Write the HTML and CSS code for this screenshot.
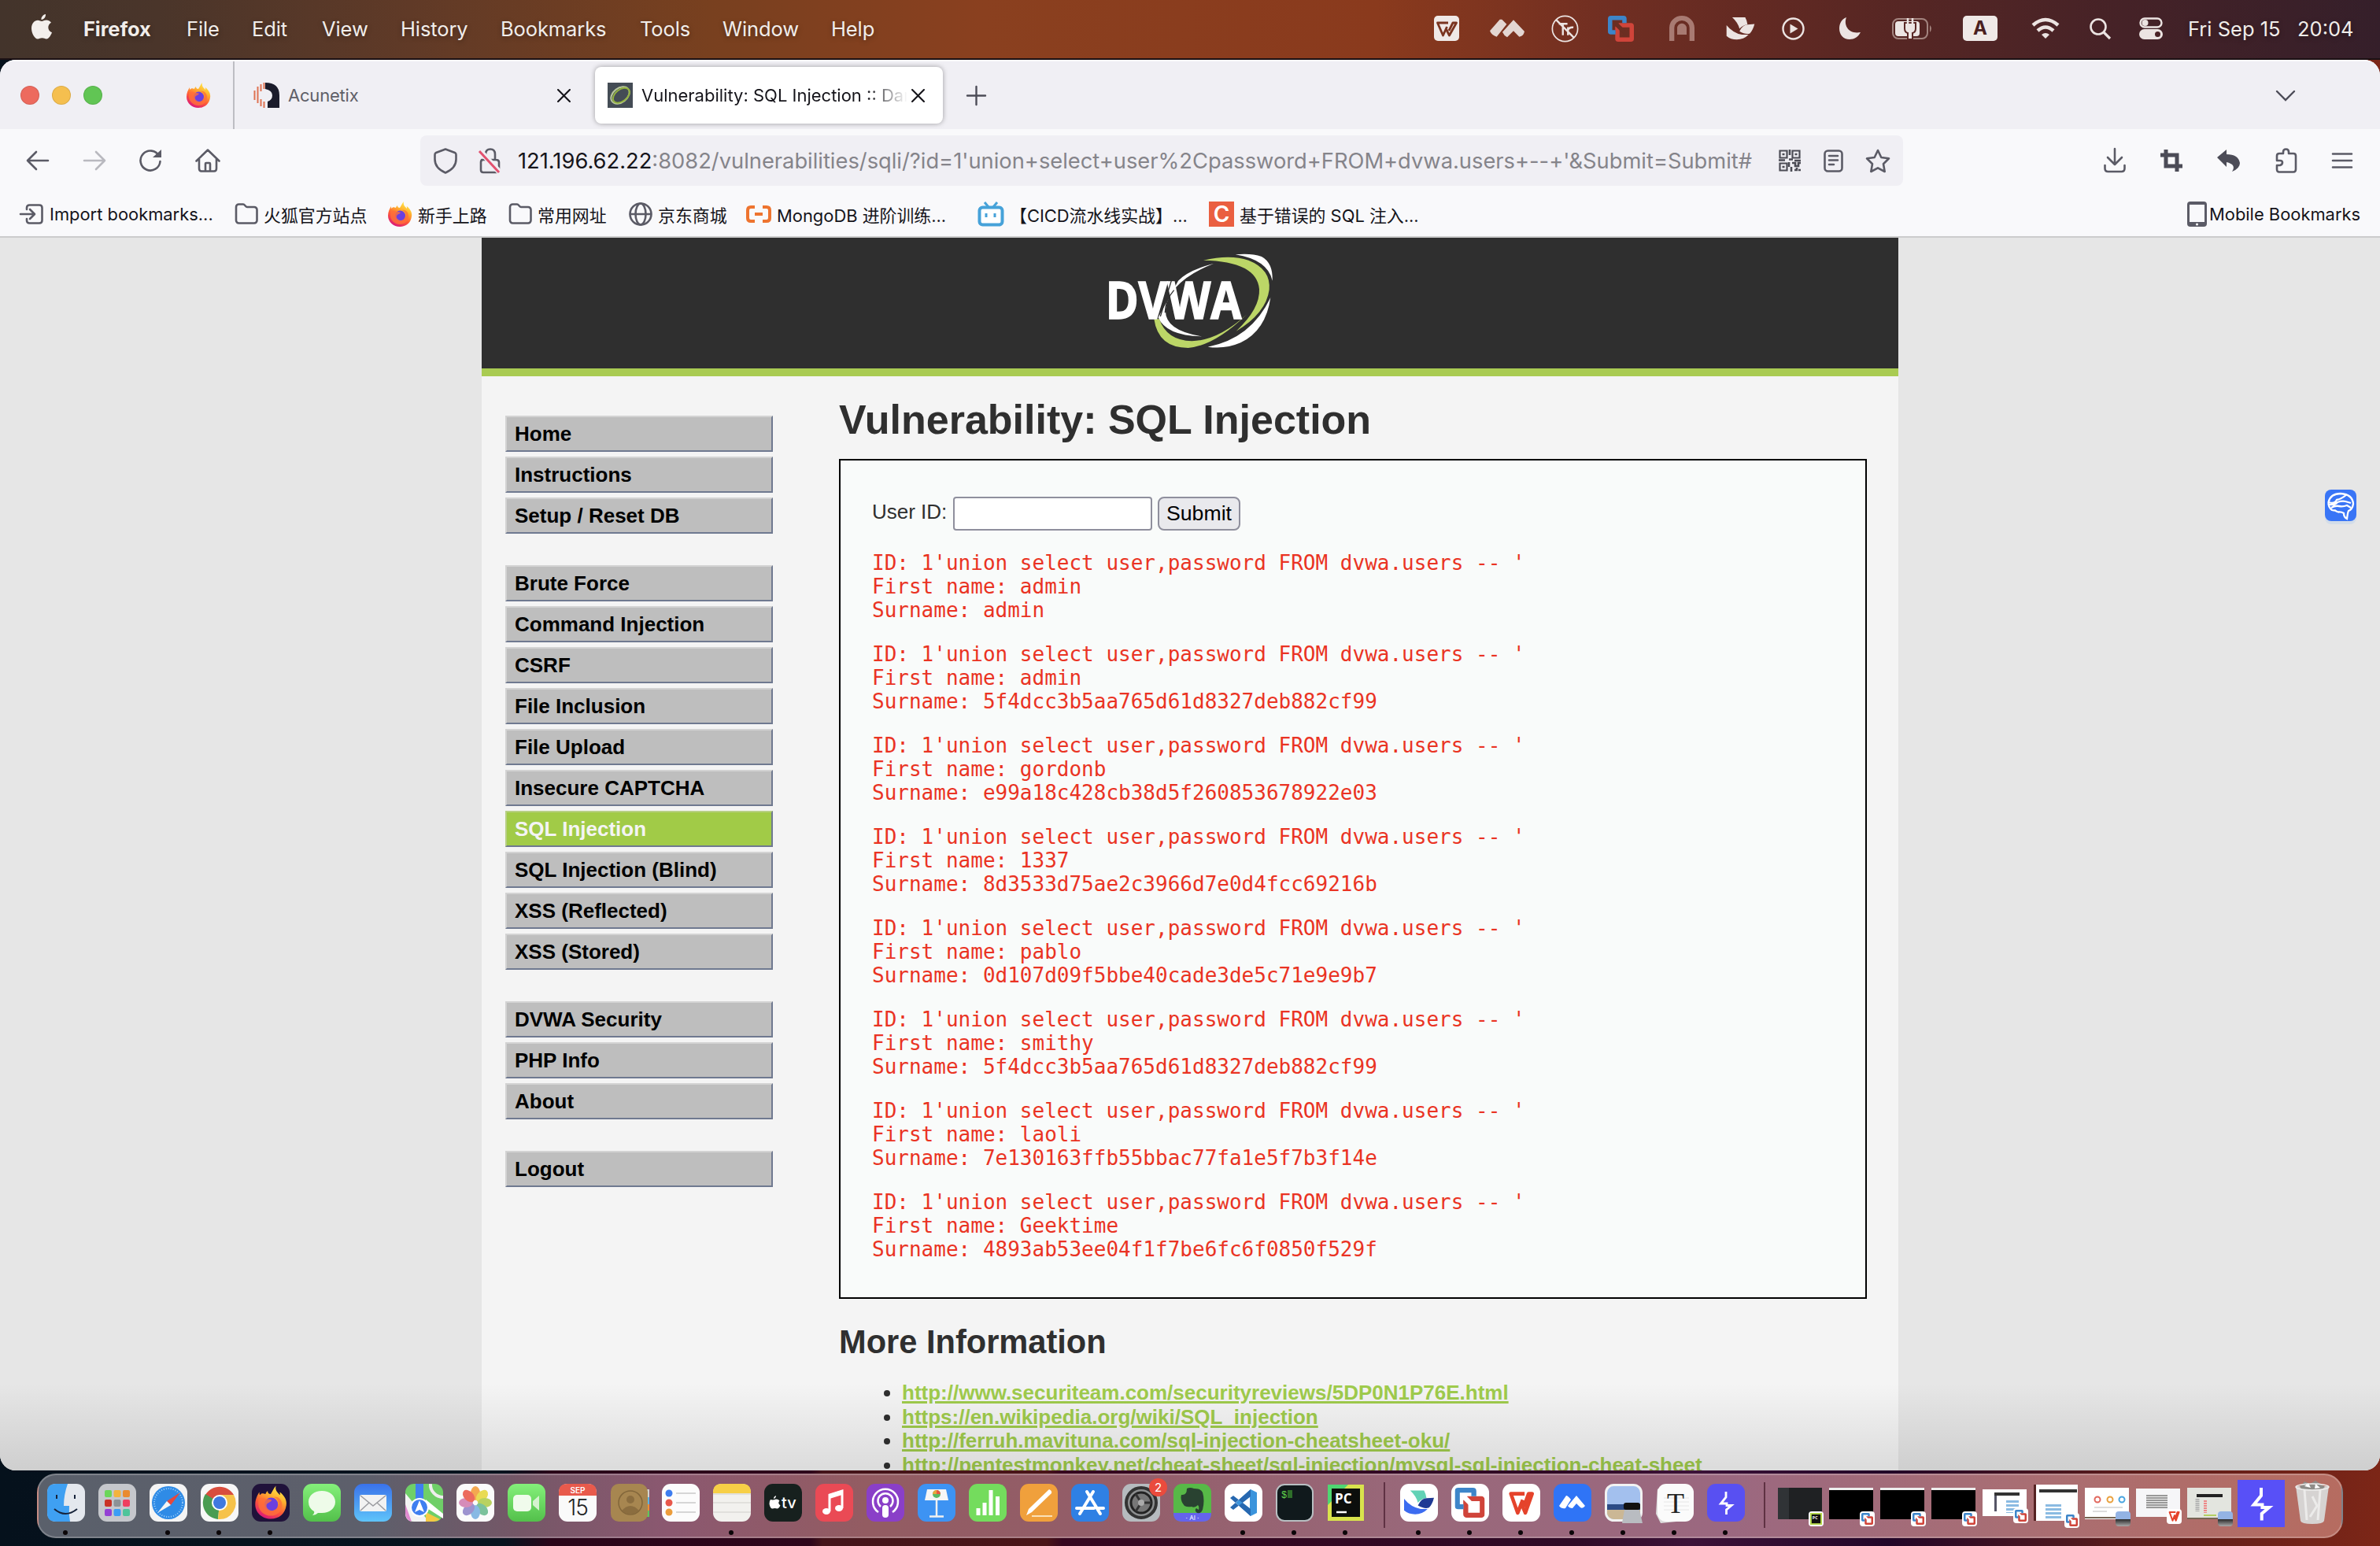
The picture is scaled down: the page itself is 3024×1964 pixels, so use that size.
FILE: index.html
```html
<!DOCTYPE html>
<html lang="en">
<head>
<meta charset="utf-8">
<title>Vulnerability: SQL Injection :: Damn Vulnerable Web Application</title>
<link rel="stylesheet" href="styles.css">
</head>
<body>
<svg class="defs" width="0" height="0">
  <defs>
    <linearGradient id="gFlame" x1="0.8" y1="0" x2="0.3" y2="1"><stop offset="0" stop-color="#fff44f"/><stop offset=".35" stop-color="#ffb02e"/><stop offset=".65" stop-color="#ff5a36"/><stop offset="1" stop-color="#d9157c"/></linearGradient>
    <linearGradient id="gBlue" x1="0" y1="0" x2="0" y2="1"><stop offset="0" stop-color="#3a72ea"/><stop offset="1" stop-color="#5fc4fa"/></linearGradient>
    <linearGradient id="gGreen" x1="0" y1="0" x2="0" y2="1"><stop offset="0" stop-color="#84f07a"/><stop offset="1" stop-color="#53c04b"/></linearGradient>
    <symbol id="firefox" viewBox="0 0 32 32"><path d="M21 0c-1 4 1 6 4 9 0-1 0-2-.3-3C29 9 32 14 31 19c-1 8-7 13-15 13S1 26 1 18c0-5 2-9 4-12 0 1 0 2 .5 3C7 7 8 7 11 8c0-1 1-2 2-3 0 2 1 3 3 3 2-3 3-6 5-8z" fill="url(#gFlame)"/><circle cx="16.500" cy="18" r="6.500" fill="#6b3fe0"/><path d="M4 13c3-2 6-1 8 0 2 0 4 0 5 1-1 2-4 2-5 4-1 3 2 6 6 6 4-1 6-4 6-7-1-3-2-5-5-6 5-1 8 3 8 8 0 6-5 10-11 10S4 24 4 18z" fill="#ff7139" opacity=".8"/></symbol>
    <symbol id="close" viewBox="0 0 16 16"><path d="M1 1l14 14M15 1L1 15" stroke="currentColor" stroke-width="2" fill="none" stroke-linecap="round"/></symbol>
    <symbol id="folder" viewBox="0 0 30 28"><path d="M2 5a3.500 3.500 0 0 1 3.500-3.500h5.500c2 0 3 3.500 5 3.500h9A3.500 3.500 0 0 1 28.500 8.500V22a3.500 3.500 0 0 1-3.500 3.500H5.500A3.500 3.500 0 0 1 2 22z" fill="none" stroke="#5b5b66" stroke-width="2.600"/></symbol>
    <symbol id="vm" viewBox="0 0 96 96"><rect x="35" y="35" width="53" height="53" rx="3" fill="none" stroke="#d0443a" stroke-width="16"/><path d="M28 61H11q-3 0-3-3V11q0-3 3-3h47q3 0 3 3v16" fill="none" stroke="#3d85c9" stroke-width="16"/><path class="vm-arrow" d="M20 20h27l-8 8 30 30 8-8v27H50l8-8-30-30-8 8z"/></symbol>
    <symbol id="wps" viewBox="0 0 74 74"><path d="M46 10H8l19 53 14-36M36 34l12 29L67 10H57L44 46" fill="none" stroke="currentColor" stroke-width="10" stroke-linejoin="round"/></symbol>
    <symbol id="bolt" viewBox="0 0 48 48"><path d="M24 10v7l-6.500 8H25v2.500h6L24.500 33v6" fill="none" stroke="#fff" stroke-width="2.800"/></symbol>
    <symbol id="bird" viewBox="0 0 108 88"><path d="M22 0h50q6 10 9 28Q62 30 50 44 44 20 22 0z" class="b1"/><path d="M0 30q24 30 60 37h25Q66 86 40 86 16 86 0 72z" class="b2"/><path d="M50 54q12-26 32-26l26-2q-6 24-18 36-16 6-40-8z" class="b3"/></symbol>
    <symbol id="bili" viewBox="0 0 34 32"><path d="M9 1l5 6M25 1l-5 6" stroke="#46a2d9" stroke-width="3"/><rect x="2.500" y="7.500" width="29" height="22" rx="4" fill="#fff" stroke="#46a2d9" stroke-width="4"/><path d="M11 15v5M22 15v5" stroke="#46a2d9" stroke-width="3"/></symbol>
  </defs>
</svg>

<header class="menubar">
  <nav class="menus">
    <svg class="apple" viewBox="0 0 26 32"><path d="M18 0c.3 4-2.500 7-5.500 7C12 3.500 15 .5 18 0zM13 9c1.500 0 3-1.500 6-1.500 2 0 4.500 1 6 3.300-5.500 3.200-4.500 10.500 1 12.500C24.500 27 22 31.500 19 31.500c-2 0-3-1.200-5.500-1.200S10 31.500 8 31.500C4 31.500 0 24 0 18c0-6.500 4-10.300 8-10.300 2.300 0 3.800 1.300 5 1.300z" fill="#f3efec"/></svg>
    <b>Firefox</b><span>File</span><span>Edit</span><span>View</span><span>History</span><span>Bookmarks</span><span>Tools</span><span>Window</span><span>Help</span>
  </nav>
  <div class="status">
    <svg width="32" height="32" viewBox="0 0 32 32"><rect width="32" height="32" rx="5" fill="#efe9e7"/><path d="M18 9H4.500l7 16 5-11M15 16l4.500 9L28.500 9H24l-5 10" fill="none" stroke="#7a3420" stroke-width="2.800" stroke-linejoin="round"/></svg>
    <svg width="44" height="24" viewBox="0 0 132 68"><path d="M0 44L38 0h8l18 18-38 48Q8 62 0 44zM48 48L90 2l42 44q-4 18-20 20L90 44 66 68q-12-6-18-20z" fill="#e3d6d2"/></svg>
    <svg width="35" height="35" viewBox="0 0 102 102" fill="none" stroke="#ece4e2" stroke-width="5"><circle cx="51" cy="51" r="47"/><path d="M18 18l66 66M28 33h32M43 33v42M62 45v30M62 56q5-12 20-10" stroke-width="7"/></svg>
    <svg width="33" height="33" class="vm-bar"><use href="#vm"/></svg>
    <svg width="32" height="32" viewBox="0 0 96 96" fill="#a87a72"><path d="M0 96V46a48 46 0 0 1 96 0v50H77V46a29 28 0 0 0-58 0v50zM30 72V48a18 19 0 0 1 36 0v24z"/></svg>
    <svg width="37" height="29"><use href="#bird"/></svg>
    <svg width="29" height="29" viewBox="0 0 29 29"><circle cx="14.500" cy="14.500" r="13" fill="none" stroke="#ece4e2" stroke-width="2.400"/><path d="M10.500 8.500v12l10-6z" fill="#ece4e2"/></svg>
    <svg width="29" height="29" viewBox="0 0 29 29"><path d="M10 0C6 10 13 22 28 19 25 25 20 28 14 28 6 28 1 22 1 14 1 8 4 2 10 0z" fill="#ece4e2"/></svg>
    <svg width="52" height="27" viewBox="0 0 52 27"><rect x="1" y="1" width="44" height="25" rx="7" fill="none" stroke="#a3847f" stroke-width="2"/><path d="M48 9q4 4 0 9z" fill="#a3847f"/><rect x="4" y="4" width="31" height="19" rx="4" fill="#ece4e2"/><path d="M16 6h14v7q0 5-4 6v8h-6v-8q-4-1-4-6z" fill="#ece4e2" stroke="#5a2724" stroke-width="2"/><path d="M20 0v7M26 0v7" stroke="#ece4e2" stroke-width="2.500"/></svg>
    <span class="ime">A</span>
    <svg width="36" height="27" viewBox="0 0 36 27" fill="none" stroke="#ece4e2" stroke-width="4.500"><path d="M2 9q16-14 32 0M8 16q10-9 20 0"/><path d="M18 26l-5-5q5-4 10 0z" fill="#ece4e2" stroke="none"/></svg>
    <svg width="27" height="27" viewBox="0 0 27 27" fill="none" stroke="#ece4e2" stroke-width="2.600"><circle cx="11" cy="11" r="9.500"/><path d="M18 18l8 8" stroke-width="3.200"/></svg>
    <svg width="30" height="28" viewBox="0 0 30 28"><rect x="1.500" y="1.500" width="27" height="11" rx="5.500" fill="none" stroke="#ece4e2" stroke-width="2.400"/><circle cx="7.500" cy="7" r="4" fill="#ece4e2"/><rect y="15" width="30" height="13" rx="6.500" fill="#ece4e2"/><circle cx="23.500" cy="21.500" r="3.500" fill="#4a2226"/></svg>
    <span>Fri Sep 15</span><span>20:04</span>
  </div>
</header>

<main class="window">
  <div class="tabstrip">
    <div class="lights"><i class="red"></i><i class="yellow"></i><i class="green"></i></div>
    <div class="pinned"><svg width="32" height="32"><use href="#firefox"/></svg></div>
    <div class="tab">
      <svg width="33" height="32" viewBox="0 0 33 32"><path d="M15 0q18 0 18 16v16H18v-8q6-2 6-8t-9-8z" fill="#1b1c2b"/><path d="M1.500 10v12M5.500 5v21M9.500 2v9M9.500 21v9M13.500 0v8M13.500 24v8" stroke="#df7252" stroke-width="2"/></svg>
      <span class="tab-title">Acunetix</span>
      <svg class="x" width="17" height="17"><use href="#close"/></svg>
    </div>
    <div class="tab active">
      <svg width="32" height="32" viewBox="0 0 32 32"><rect width="32" height="32" fill="#444c55"/><g transform="rotate(-38 16 16)" fill="none"><ellipse cx="16" cy="16" rx="13" ry="9" stroke="#b9c79b" stroke-width="2"/><ellipse cx="17" cy="17" rx="12" ry="7.500" stroke="#93b33f" stroke-width="2"/></g></svg>
      <span class="tab-title">Vulnerability: SQL Injection :: Damn</span>
      <svg class="x" width="17" height="17"><use href="#close"/></svg>
    </div>
    <svg class="plus" width="25" height="25" viewBox="0 0 25 25"><path d="M12.500 1v23M1 12.500h23" stroke="#4c4c57" stroke-width="2.400" stroke-linecap="round"/></svg>
    <svg class="chev" width="26" height="15" viewBox="0 0 26 15"><path d="M2 2l11 11L24 2" fill="none" stroke="#4c4c57" stroke-width="2.400" stroke-linecap="round"/></svg>
  </div>

  <div class="toolbar">
    <div class="navbtns">
      <svg width="30" height="28" viewBox="0 0 30 28"><path d="M28 14H2M13 3L2 14l11 11" class="ln"/></svg>
      <svg width="30" height="28" viewBox="0 0 30 28" class="dim"><path d="M2 14h26M17 3l11 11-11 11" class="ln"/></svg>
      <svg width="30" height="28" viewBox="0 0 30 28"><path d="M26 8A12.500 12.500 0 1 0 27.500 15" class="ln"/><path d="M29 0v10H18z" fill="#5b5b66"/></svg>
      <svg width="32" height="30" viewBox="0 0 32 30"><path d="M1.500 15.500L16 1.500l14.500 14M5 13v12q0 3.500 3 3.500h16q3 0 3-3.500V13M13 28v-9q0-1 1-1h4q1 0 1 1v9" class="ln"/></svg>
    </div>
    <div class="urlbar">
      <svg width="30" height="33" viewBox="0 0 30 33"><path d="M15 1.500l12 4.500q1.500.6 1.500 2.500v6q0 11-13.500 17Q1.500 25.500 1.500 14.500v-6Q1.500 6.600 3 6z" class="ln"/></svg>
      <svg width="29" height="33" viewBox="0 0 29 33"><path d="M9 15V8q0-6.500 6-6.500T21 8v7M4 15h18q4 0 4 3v10q0 3-3 3H6q-3 0-3-3V18q0-3 3-3" class="ln"/><path d="M2 4l25 27" stroke="#f0eff4" stroke-width="7"/><path d="M1 4l25 27" stroke="#e2516f" stroke-width="3"/></svg>
      <span class="url"><em>121.196.62.22</em>:8082/vulnerabilities/sqli/?id=1'union+select+user%2Cpassword+FROM+dvwa.users+--+'&amp;Submit=Submit#</span>
      <svg width="28" height="28" viewBox="0 0 28 28"><g fill="none" stroke="#4c4c55" stroke-width="2.200"><path d="M1.500 1.500h9v9h-9zM17.500 1.500h9v9h-9zM1.500 17.500h9v9h-9z"/><path d="M4.500 6h3M20.500 6h3M4.500 22h3M14 0v7M13 12.500h5M0 13.500h8M20 14h8M13 16v6M17 17h4v4h4v-4h3M16 22v6M20 26h3v-3M25 26h3" stroke-width="2.600"/></g></svg>
      <svg width="26" height="29" viewBox="0 0 26 29"><rect x="1.500" y="1.500" width="22" height="26" rx="4" class="ln"/><path d="M7 8h11M7 13.500h11M7 19h6" class="ln"/></svg>
      <svg width="32" height="31" viewBox="0 0 32 31"><path d="M16 2l4.300 9 9.700 1.300-7 6.900 1.700 9.800-8.700-4.700L7.300 29 9 19.200 2 12.300 11.700 11z" class="ln" stroke-linejoin="round"/></svg>
    </div>
    <div class="actions">
      <svg width="28" height="32" viewBox="0 0 28 32"><path d="M14 1v20M5 12l9 9 9-9M1.500 22v4q0 4 4 4h17q4 0 4-4v-4" class="ln"/></svg>
      <svg width="28" height="28" viewBox="0 0 28 28"><path d="M0 7h21v21M7 0v21h21" fill="none" stroke="#4c4c57" stroke-width="5"/></svg>
      <svg width="30" height="28" viewBox="0 0 30 28"><path d="M0 10L12 0v6q15 0 17 11 0 7-10 11 6-9-7-12v6z" fill="#4c4c57"/></svg>
      <svg width="28" height="32" viewBox="0 0 28 32"><path d="M2 10q0-3 3-3h5V5q0-3.500 3.500-3.500T17 5v2h6q3 0 3 3v17q0 3.500-3 3.500H5q-3 0-3-3.500v-5h4q3-1 3-3.500T6 16H2z" class="ln"/></svg>
      <svg width="26" height="20" viewBox="0 0 26 20"><path d="M1 1.500h24M1 10h24M1 18.500h24" class="ln"/></svg>
    </div>
  </div>

  <div class="bookmarks">
    <span class="bm"><svg width="31" height="26" viewBox="0 0 31 26"><path d="M9 7V5q0-3.500 3.500-3.500H25Q28.500 1.500 28.500 5v16q0 3.500-3.500 3.500H12.500Q9 24.500 9 21v-2M1 13h17M13 7l6 6-6 6" class="ln"/></svg>Import bookmarks...</span>
    <span class="bm"><svg width="30" height="28"><use href="#folder"/></svg>火狐官方站点</span>
    <span class="bm"><svg width="32" height="32"><use href="#firefox"/></svg>新手上路</span>
    <span class="bm"><svg width="30" height="28"><use href="#folder"/></svg>常用网址</span>
    <span class="bm"><svg width="30" height="30" viewBox="0 0 30 30"><g class="ln"><circle cx="15" cy="15" r="13.500"/><ellipse cx="15" cy="15" rx="6.500" ry="13.500"/><path d="M2 15h26"/></g></svg>京东商城</span>
    <span class="bm"><svg width="32" height="22" viewBox="0 0 32 22" fill="none" stroke="#ee742f" stroke-width="4"><path d="M11 2H6Q2 2 2 6v10q0 4 4 4h5M21 2h5q4 0 4 4v10q0 4-4 4h-5M11 11h10"/></svg>MongoDB 进阶训练...</span>
    <span class="bm"><svg width="34" height="32"><use href="#bili"/></svg>【CICD流水线实战】...</span>
    <span class="bm"><i class="csdn">C</i>基于错误的 SQL 注入...</span>
    <span class="bm"><svg width="25" height="32" viewBox="0 0 25 32"><rect width="25" height="32" rx="4" fill="#5b5b66"/><rect x="3" y="4" width="19" height="22" fill="#f9f9fb"/><circle cx="12.500" cy="29" r="1.500" fill="#fff"/></svg>Mobile Bookmarks</span>
  </div>

  <div class="viewport">
    <div class="page">
      <div class="banner">
        <svg width="210" height="120" viewBox="52 36 630 360">
          <path d="M540 40Q600 34 640 48q44 24 41 92Q664 60 540 40z" fill="#fff"/>
          <path d="M418 62Q520 38 590 62q86 34 79 112-12 90-126 158 92-86 88-160Q622 66 418 62z" fill="#bcd667"/>
          <path d="M674 204Q656 330 560 376q-60 26-125 16Q600 360 674 204z" fill="#fff"/>
          <path d="M230 286q16 110 130 110 100-8 224-128-110 100-210 102-96-2-124-84z" fill="#bcd667"/>
          <text x="45" y="286" textLength="518" lengthAdjust="spacingAndGlyphs" class="logo">DVWA</text>
          <path d="M458 74Q360 100 322 140L246 280q30 70 166 72-146-22-138-106Q290 140 458 74z" fill="#fff"/>
          <path d="M296 140L254 276M306 176Q272 214 272 262" fill="none" stroke="#2f2f2f" stroke-width="4"/>
        </svg>
      </div>
      <div class="columns">
        <nav class="sidebar">
          <ul><li>Home</li><li>Instructions</li><li>Setup / Reset DB</li></ul>
          <ul><li>Brute Force</li><li>Command Injection</li><li>CSRF</li><li>File Inclusion</li><li>File Upload</li><li>Insecure CAPTCHA</li><li class="selected">SQL Injection</li><li>SQL Injection (Blind)</li><li>XSS (Reflected)</li><li>XSS (Stored)</li></ul>
          <ul><li>DVWA Security</li><li>PHP Info</li><li>About</li></ul>
          <ul><li>Logout</li></ul>
        </nav>
        <section class="content">
          <h1>Vulnerability: SQL Injection</h1>
          <div class="vulnerable">
            <form class="lookup"><label for="uid">User ID:</label><input id="uid" type="text"><button type="button">Submit</button></form>
<pre>ID: 1'union select user,password FROM dvwa.users -- '
First name: admin
Surname: admin</pre>
<pre>ID: 1'union select user,password FROM dvwa.users -- '
First name: admin
Surname: 5f4dcc3b5aa765d61d8327deb882cf99</pre>
<pre>ID: 1'union select user,password FROM dvwa.users -- '
First name: gordonb
Surname: e99a18c428cb38d5f260853678922e03</pre>
<pre>ID: 1'union select user,password FROM dvwa.users -- '
First name: 1337
Surname: 8d3533d75ae2c3966d7e0d4fcc69216b</pre>
<pre>ID: 1'union select user,password FROM dvwa.users -- '
First name: pablo
Surname: 0d107d09f5bbe40cade3de5c71e9e9b7</pre>
<pre>ID: 1'union select user,password FROM dvwa.users -- '
First name: smithy
Surname: 5f4dcc3b5aa765d61d8327deb882cf99</pre>
<pre>ID: 1'union select user,password FROM dvwa.users -- '
First name: laoli
Surname: 7e130163ffb55bbac77fa1e5f7b3f14e</pre>
<pre>ID: 1'union select user,password FROM dvwa.users -- '
First name: Geektime
Surname: 4893ab53ee04f1f7be6fc6f0850f529f</pre>
          </div>
          <h2>More Information</h2>
          <ul class="links">
            <li><a>http://www.securiteam.com/securityreviews/5DP0N1P76E.html</a></li>
            <li><a>https://en.wikipedia.org/wiki/SQL_injection</a></li>
            <li><a>http://ferruh.mavituna.com/sql-injection-cheatsheet-oku/</a></li>
            <li><a>http://pentestmonkey.net/cheat-sheet/sql-injection/mysql-sql-injection-cheat-sheet</a></li>
          </ul>
        </section>
      </div>
    </div>
    <div class="assistant">
      <svg width="34" height="34" viewBox="0 0 34 34" fill="none" stroke="#fff" stroke-width="2.300"><path d="M6 23Q1 19 1.500 13 4 2 17 2q15 1 16 13-1 7-6 9-1 2-2 10-4-2-4-7-3-2-7-1.500-2-.5-4-2-2 0-4-.5z"/><path d="M2 13q7 3 10-3 6-1 13-7M2 16q8 1 11-3 6-2 10-1l7 2M5 20q5-3 10-2t10-1l5 3"/></svg>
    </div>
  </div>
</main>

<footer class="dock">
  <div class="apps">
    <i class="app on"><svg viewBox="0 0 48 48"><rect width="48" height="48" rx="11" fill="#e4e8ee"/><path d="M11 0h15q-5 14-5 28h7q-1 10 1 20H11Q0 48 0 37V11Q0 0 11 0z" fill="#3fa0f2"/><path d="M12 14v5M35 14v5M9 32q14 12 29 0" stroke="#17233a" stroke-width="2" fill="none"/></svg></i>
    <i class="app"><svg viewBox="0 0 48 48"><rect width="48" height="48" rx="11" fill="#c5c7cc"/><g><rect x="8" y="8" width="9" height="9" rx="2" fill="#6bd65a"/><rect x="19.500" y="8" width="9" height="9" rx="2" fill="#f3b33c"/><rect x="31" y="8" width="9" height="9" rx="2" fill="#e98a2f"/><rect x="8" y="20" width="9" height="9" rx="2" fill="#c93326"/><rect x="19.500" y="20" width="9" height="9" rx="2" fill="#8c9296"/><rect x="31" y="20" width="9" height="9" rx="2" fill="#ef4060"/><rect x="8" y="32" width="9" height="9" rx="2" fill="#9440d4"/><rect x="19.500" y="32" width="9" height="9" rx="2" fill="#3b9df5"/><rect x="31" y="32" width="9" height="9" rx="2" fill="#4fc49a"/></g></svg></i>
    <i class="app on"><svg viewBox="0 0 48 48"><rect width="48" height="48" rx="11" fill="#f4f4f4"/><circle cx="24" cy="24" r="21" fill="#2f8be6"/><circle cx="24" cy="24" r="18" fill="none" stroke="#9fd0fa" stroke-width="2" stroke-dasharray="1 2"/><path d="M39 11L27 27l-5-5z" fill="#e8473c"/><path d="M10 37l12-15 5 5z" fill="#f5f5f5"/></svg></i>
    <i class="app on"><svg viewBox="0 0 48 48"><rect width="48" height="48" rx="11" fill="#f7f7f7"/><path d="M24 24L6 14a21 21 0 0 1 36 0z" fill="#d94e3e"/><path d="M24 24L6 13a21 21 0 0 0 16 32z" fill="#4a9c52"/><path d="M24 24l-2 21A21 21 0 0 0 42 14H24z" fill="#f6c24a"/><circle cx="24" cy="24" r="10" fill="#fff"/><circle cx="24" cy="24" r="8" fill="#4079e0"/></svg></i>
    <i class="app on"><svg viewBox="0 0 48 48"><rect width="48" height="48" rx="11" fill="#20123a"/><use href="#firefox" x="3" y="2" width="42" height="43"/></svg></i>
    <i class="app"><svg viewBox="0 0 48 48"><rect width="48" height="48" rx="11" fill="url(#gGreen)"/><path d="M24 9c10 0 17 6 17 14s-7 14-17 14h-5q-3 3-7 3 3-3 2-5Q7 31 7 23C7 15 14 9 24 9z" fill="#eefbe9"/></svg></i>
    <i class="app"><svg viewBox="0 0 48 48"><rect width="48" height="48" rx="11" fill="url(#gBlue)"/><rect x="7" y="14" width="34" height="21" rx="2" fill="#f2f2f2"/><path d="M8 15l16 13 16-13M8 34l11-10M40 34L29 24" stroke="#9b9ba0" stroke-width="1.500" fill="none"/></svg></i>
    <i class="app"><svg viewBox="0 0 48 48"><rect width="48" height="48" rx="11" fill="#6fcf68"/><path d="M0 12L30 48H11Q0 48 0 37z" fill="#f3f3f3"/><path d="M0 26l8 22Q0 46 0 37z" fill="#e08ad0"/><path d="M26 48V36l18 9q-4 3-8 3z" fill="#f4c944"/><path d="M26 20l22 18v6L26 30z" fill="#fff"/><path d="M13 0h10v28H13z" fill="#3f7ff0"/><path d="M32 0a16 16 0 0 0 16 17" stroke="#eee" stroke-width="4" fill="none"/><circle cx="18" cy="30" r="12" fill="#fff"/><circle cx="18" cy="30" r="10" fill="#3f7ff0"/><path d="M18 21l6 15-6-3-6 3z" fill="#fff"/></svg></i>
    <i class="app"><svg viewBox="0 0 48 48"><rect width="48" height="48" rx="11" fill="#fbfbfb"/><g opacity=".85"><ellipse cx="24" cy="12" rx="6" ry="9" fill="#f39a33"/><ellipse cx="24" cy="12" rx="6" ry="9" fill="#e6d636" transform="rotate(45 24 24)"/><ellipse cx="24" cy="12" rx="6" ry="9" fill="#aecb45" transform="rotate(90 24 24)"/><ellipse cx="24" cy="12" rx="6" ry="9" fill="#67b98c" transform="rotate(135 24 24)"/><ellipse cx="24" cy="12" rx="6" ry="9" fill="#75aee0" transform="rotate(180 24 24)"/><ellipse cx="24" cy="12" rx="6" ry="9" fill="#8d82c8" transform="rotate(225 24 24)"/><ellipse cx="24" cy="12" rx="6" ry="9" fill="#d079ae" transform="rotate(270 24 24)"/><ellipse cx="24" cy="12" rx="6" ry="9" fill="#ea5243" transform="rotate(315 24 24)"/></g></svg></i>
    <i class="app"><svg viewBox="0 0 48 48"><rect width="48" height="48" rx="11" fill="url(#gGreen)"/><rect x="7" y="14" width="23" height="21" rx="5" fill="#f0fbec"/><path d="M32 22l8-7v19l-8-7z" fill="#d5f2cf"/></svg></i>
    <i class="app"><svg viewBox="0 0 48 48"><rect width="48" height="48" rx="11" fill="#fafafa"/><path d="M0 15v-4Q0 0 11 0h26q11 0 11 11v4z" fill="#e85a4c"/><text x="24" y="12" class="cal-m">SEP</text><text x="24" y="40" class="cal-d">15</text></svg></i>
    <i class="app"><svg viewBox="0 0 48 48"><path d="M44 7h5v10h-5z" fill="#d4d4cf"/><path d="M44 17h5v9h-5z" fill="#59b4e4"/><path d="M44 26h5v8h-5z" fill="#ef8f35"/><path d="M44 34h5v8h-5z" fill="#61c65c"/><rect width="47" height="48" rx="10" fill="#a78650"/><g fill="none" stroke="#82663a" stroke-width="1.500"><circle cx="25" cy="24" r="15"/></g><circle cx="25" cy="20" r="5" fill="#8b6d3f"/><path d="M14 34q11-12 22 0-11 9-22 0z" fill="#8b6d3f"/></svg></i>
    <i class="app"><svg viewBox="0 0 48 48"><rect width="48" height="48" rx="11" fill="#fcfcfc"/><circle cx="9" cy="12" r="4.500" fill="#3d7df0"/><circle cx="9" cy="24" r="4.500" fill="#e8584b"/><circle cx="9" cy="36" r="4.500" fill="#ec9d3c"/><path d="M18 12h25M18 24h25M18 36h25" stroke="#c9c9c9" stroke-width="1.500"/></svg></i>
    <i class="app on"><svg viewBox="0 0 48 48"><rect width="48" height="48" rx="11" fill="#f2f1ee"/><path d="M0 12v-1Q0 0 11 0h26q11 0 11 11v1z" fill="#f7cf46"/><path d="M0 13h48M0 24h48M0 36h48" stroke="#d0cfcb"/></svg></i>
    <i class="app"><svg viewBox="0 0 48 48"><rect width="48" height="48" rx="11" fill="#17201e"/><path d="M15 15q0 3-3 4 0-3 3-4zM8 20q3 1 7-.5 3 0 4.500 2-3 3 1 6-2 4-4 4-3-1-6 0-3 0-4-6 0-4 1.500-5.500z" fill="#fff"/><text x="22" y="31" class="tv">tv</text></svg></i>
    <i class="app"><svg viewBox="0 0 48 48"><rect width="48" height="48" rx="11" fill="#ea4a55"/><path d="M18 35V14l16-5v22" stroke="#fff" stroke-width="3" fill="none"/><path d="M18 13l16-5v6l-16 5z" fill="#fff"/><ellipse cx="14" cy="35" rx="5" ry="4" fill="#fff"/><ellipse cx="30" cy="31" rx="5" ry="4" fill="#fff"/></svg></i>
    <i class="app"><svg viewBox="0 0 48 48"><rect width="48" height="48" rx="11" fill="#8a3fc8"/><g fill="none" stroke="#fff" stroke-width="2.500"><path d="M15 36a16 16 0 1 1 18 0M18 29a9.500 9.500 0 1 1 12 0"/></g><circle cx="24" cy="21" r="4" fill="#fff"/><rect x="20" y="27" width="8" height="16" rx="4" fill="#fff"/></svg></i>
    <i class="app"><svg viewBox="0 0 48 48"><rect width="48" height="48" rx="11" fill="#3d93f3"/><path d="M12 7h24l3 14H9z" fill="#f6f6f6"/><circle cx="24" cy="13" r="5" fill="#59b965"/><path d="M24 13V8a5 5 0 0 1 5 5z" fill="#e9573f"/><path d="M24 13h-5a5 5 0 0 1 5-5z" fill="#eaa63b"/><path d="M24 21v20M15 41.500h18" stroke="#f0f0f0" stroke-width="2.500"/></svg></i>
    <i class="app"><svg viewBox="0 0 48 48"><rect width="48" height="48" rx="11" fill="#74dc5d"/><path d="M12 40v-9M20 40V24M28 40V8M36.500 40V16" stroke="#fff" stroke-width="5" /></svg></i>
    <i class="app"><svg viewBox="0 0 48 48"><rect width="48" height="48" rx="11" fill="#f0a03c"/><path d="M37 7q4 2 3 5L15 36l-7 4 3-8z" fill="#fff"/><path d="M15 41h26" stroke="#fbe1b8" stroke-width="2"/></svg></i>
    <i class="app"><svg viewBox="0 0 48 48"><rect width="48" height="48" rx="11" fill="#2f80e4"/><path d="M20 10l17 28M28 10L11 38M7 31h22M34 31h7" stroke="#fff" stroke-width="4" stroke-linecap="round"/></svg></i>
    <i class="app"><svg viewBox="0 0 48 48"><rect width="48" height="48" rx="11" fill="#b6bbbf"/><circle cx="24" cy="24" r="19" fill="#8d8f90" stroke="#333" stroke-width="4"/><circle cx="24" cy="24" r="13" fill="#777" stroke="#222" stroke-width="3"/><path d="M24 24l13 0M24 24l-7-11M24 24l-7 11" stroke="#333" stroke-width="3"/><circle cx="24" cy="24" r="4" fill="#aaa"/></svg><em>2</em></i>
    <i class="app"><svg viewBox="0 0 48 48"><rect width="48" height="48" rx="11" fill="#57b947"/><path d="M0 37h48q0 11-11 11H11Q0 48 0 37z" fill="#6563ec"/><path d="M17 6q4-2 9 0 9 0 11 5 3 10 0 22-2 5-7 4-4-3-1-6l3 2q1-4-1-6-4 4-8 2-5 1-9-1-6-7-4-14 7 1 7-8z" fill="#294231"/><text x="24" y="46" class="ai">· AI ·</text></svg></i>
    <i class="app on"><svg viewBox="0 0 48 48"><rect width="48" height="48" rx="11" fill="#fff"/><path d="M33 7l8 4v26l-8 4L14 24z" fill="#3b94dc"/><path d="M33 7v9L11 33l-4-3zM33 41v-9L11 15l-4 3z" fill="#2768b0"/><path d="M32 17v14l-9-7z" fill="#fff"/></svg></i>
    <i class="app on"><svg viewBox="0 0 48 48"><rect x="1" y="1" width="46" height="46" rx="10" fill="#10191c" stroke="#b8bfc2" stroke-width="2"/><text x="7" y="18" class="term">$</text><path d="M15 8h6v10h-6z" fill="#2e6f2a"/></svg></i>
    <i class="app on"><svg viewBox="0 0 48 48"><path d="M1 1h46v46H1z" fill="#d9e34c"/><path d="M1 1h26L1 27z" fill="#4ed672"/><path d="M6 6h36v36H6z" fill="#0c0e0c"/><text x="10" y="25" class="pc">PC</text><path d="M12 36h13" stroke="#fff" stroke-width="2.500"/></svg></i>
  </div>
  <hr>
  <div class="apps">
    <i class="app on"><svg viewBox="0 0 48 48" class="bird-app"><rect width="48" height="48" rx="11" fill="#fff"/><use href="#bird" x="5" y="8" width="38" height="32"/></svg></i>
    <i class="app on"><svg viewBox="0 0 48 48"><rect width="48" height="48" rx="11" fill="#fff"/><use href="#vm" x="4.500" y="5" width="38" height="38"/></svg></i>
    <i class="app on"><svg viewBox="0 0 48 48" class="wps-app"><rect width="48" height="48" rx="11" fill="#fff"/><use href="#wps" x="6" y="8" width="36" height="34"/></svg></i>
    <i class="app on"><svg viewBox="0 0 48 48"><rect width="48" height="48" rx="11" fill="#2f74f6"/><path d="M7 28l9-13q2 0 6 5l-7 11q-5 1-8-3zM18 28l11-13 11 13q-3 4-6 2l-5-5-5 6q-4 0-6-3z" fill="#fff"/></svg></i>
    <i class="app on"><svg viewBox="0 0 48 48"><rect x="1.500" y="1.500" width="45" height="45" rx="10" fill="#a3c0ee" stroke="#f2f2f2" stroke-width="3"/><path d="M3 26h42v7H3z" fill="#2c4b86"/><path d="M3 33h42v5q-2 7-9 7H12q-7 0-9-7z" fill="#cbb795"/><rect x="24" y="24" width="21" height="9" rx="3" fill="#111"/><path d="M25 33h19l4 17H22z" fill="#b9bcc1"/></svg></i>
    <i class="app on"><svg viewBox="0 0 48 48"><path d="M2 6L0 38l6 12 30-3z" fill="#ddd"/><rect x="2" width="46" height="48" rx="11" fill="#fbfbfb"/><path d="M10 18h32M10 23h32M10 28h32M10 33h32" stroke="#e6e6e6"/><text x="25" y="37" class="typora">T</text></svg></i>
    <i class="app on"><svg viewBox="0 0 48 48"><rect width="48" height="48" rx="11" fill="#5850f2"/><use href="#bolt" width="48" height="48"/></svg></i>
  </div>
  <hr>
  <div class="minis">
    <i class="mini ide"><b><svg viewBox="0 0 48 48"><path d="M0 0h48v48H0z" fill="#b4d94a"/><path d="M6 6h36v36H6z" fill="#111"/><text x="9" y="26" class="pc">PC</text></svg></b></i>
    <i class="mini black"><b><svg><use href="#vm"/></svg></b></i>
    <i class="mini black"><b><svg><use href="#vm"/></svg></b></i>
    <i class="mini black"><b><svg><use href="#vm"/></svg></b></i>
    <i class="mini doc short"><b><svg><use href="#vm"/></svg></b></i>
    <i class="mini doc tall"><b><svg><use href="#vm"/></svg></b></i>
    <i class="mini rings"><svg viewBox="0 0 56 40" fill="none" stroke-width="2"><circle cx="16" cy="15" r="3.500" stroke="#e2685e"/><circle cx="32" cy="15" r="3.500" stroke="#e9a13e"/><circle cx="47" cy="15" r="3.500" stroke="#4aa5e0"/><path d="M12 25h36M10 30h18" stroke="#ddd"/><path d="M0 38h56" stroke="#765"/></svg><b class="pv"></b></i>
    <i class="mini text"><b><svg class="wps-app"><use href="#wps"/></svg></b></i>
    <i class="mini dvwa"><svg viewBox="0 0 56 40"><path d="M12 8h33v4H12z" fill="#222"/><path d="M23 16v16" stroke="#e88" stroke-width="4" stroke-dasharray="2 1"/><path d="M13 14v16" stroke="#aaa" stroke-width="5" stroke-dasharray="1.500 1"/><path d="M21 35h16" stroke="#b3cf62" stroke-width="2"/><path d="M0 39h56" stroke="#765" stroke-width="2"/></svg><b class="pv"></b></i>
  </div>
  <i class="burp"><svg viewBox="8 8 32 32"><use href="#bolt" width="48" height="48"/></svg></i>
  <svg class="trash" viewBox="0 0 44 56"><path d="M1 7h42l-6 44q-1 4-15 4T7 51z" fill="#d6d3d2"/><path d="M12 12l3 38M32 12l-3 38M22 20l6 12-9 14" stroke="#ecebea" stroke-width="3" fill="none"/><path d="M6 8l6-7 7 3 7-4 6 4 6 4-5 4H10z" fill="#8e8c88"/><path d="M12 7l5-4 3 6zM26 4l6 5-7 1z" fill="#fff"/><ellipse cx="22" cy="8" rx="21" ry="4" fill="none" stroke="#efeeed" stroke-width="1.500"/></svg>
</footer>
</body>
</html>
```

FILE: styles.css
```css
* { box-sizing: border-box; }
body {
  margin: 0;
  width: 3024px;
  height: 1964px;
  overflow: hidden;
  display: flex;
  flex-direction: column;
  font-family: Inter, "Noto Sans CJK SC", sans-serif;
  background: linear-gradient(90deg, #05111c 0, #07131e 640px, #2a0519 700px, #2e061b 1030px, #44141a 1045px, #4a1518 1330px, #36071f 1350px, #2f0a26 2000px, #3c1238 2150px, #220628 2400px, #5a1c1b 2700px, #7c2617 3024px);
}
.defs { position: absolute; }
svg { display: block; flex: none; overflow: visible; }
i, em { font-style: normal; }
.ln { fill: none; stroke: #5b5b66; stroke-width: 2.600; stroke-linecap: round; stroke-linejoin: round; }
.dim { opacity: .4; }
.vm-arrow { fill: var(--arrow, #fff); }
.vm-bar { --arrow: #6b2e22; }
.b1 { fill: var(--wing-top, #ece4e2); }
.b2 { fill: var(--body, #ece4e2); }
.b3 { fill: var(--wing, #ece4e2); }
.bird-app { --wing-top: #62d2b6; --body: #3c6cf0; --wing: #1f3a94; }
.wps-app { color: #e5432b; }

/* System menu bar */
.menubar {
  height: 76px;
  flex: none;
  display: flex;
  justify-content: space-between;
  padding-bottom: 2px;
  background: linear-gradient(90deg, #43342b 0, #4a352a 200px, #603a27 520px, #78401f 900px, #8a401f 1250px, #8a3a1d 1750px, #702e22 2050px, #5a2723 2350px, #452227 2700px, #351f2a 3024px) padding-box;
  border-bottom: 2px solid #1c1114;
  color: #f1edea;
  font-size: 25.500px;
  text-shadow: 0 2px 6px rgba(0, 0, 0, .35);
}
.menus {
  display: grid;
  grid-template-columns: 66px 131px 83px 89px 100px 127px 177px 105px 138px 100px;
  align-items: center;
  padding-left: 40px;
}
.menus b { font-weight: 700; }
.menus span, .menus b { white-space: nowrap; letter-spacing: -.1px; }
.apple { width: 26px; height: 32px; margin-top: -4px; }
.status {
  display: grid;
  grid-template-columns: 71px 78px 72px 78px 72px 71px 72px 68px 90px 87px 74px 63px 62px 139px 105px;
  align-items: center;
}
.status span { white-space: nowrap; }
.status .ime {
  width: 44px;
  height: 32px;
  border-radius: 5px;
  background: #efe9e7;
  color: #4a2020;
  font-weight: 700;
  text-align: center;
  line-height: 32px;
  font-size: 24px;
  text-shadow: none;
}

/* Browser window */
.window {
  height: 1792px;
  flex: none;
  display: flex;
  flex-direction: column;
  border-radius: 20px;
  overflow: hidden;
  background: #f9f9fb;
  color: #15141a;
}
.tabstrip {
  height: 88px;
  flex: none;
  display: flex;
  align-items: center;
  background: #f0eff4;
  border-top: 2px solid #fafafc;
  font-size: 22px;
}
.lights { display: flex; gap: 16px; padding-left: 26px; width: 236px; }
.lights i { width: 24px; height: 24px; border-radius: 50%; border: 1px solid rgba(0, 0, 0, .1); }
.red { background: #ed6a5e; }
.yellow { background: #f5bf4f; }
.green { background: #61c554; }
.pinned { align-self: stretch; width: 62px; display: flex; align-items: center; border-right: 2px solid #bdbdc3; }
.tab {
  display: flex;
  align-items: center;
  width: 442px;
  height: 72px;
  padding: 0 23px 0 16px;
  margin-left: 8px;
  gap: 11px;
  color: #15141a;
}
.tab:not(.active) .tab-title { color: #5f5f68; letter-spacing: -.2px; }
.tab.active { background: #fff; border-radius: 8px; box-shadow: 0 0 6px rgba(0, 0, 0, .35); }
.tab-title { flex: 1; overflow: hidden; white-space: nowrap; }
.tab.active .tab-title { margin-right: -6px; -webkit-mask-image: linear-gradient(90deg, #000 285px, transparent 338px); mask-image: linear-gradient(90deg, #000 285px, transparent 338px); }
.plus { margin-left: 30px; }
.chev { margin-left: auto; margin-right: 107px; }

.toolbar {
  height: 80px;
  flex: none;
  display: flex;
  align-items: center;
}
.navbtns { display: flex; align-items: center; gap: 41.500px; padding-left: 33px; width: 534px; }
.urlbar {
  width: 1884px;
  height: 64px;
  border-radius: 8px;
  background: #f0eff4;
  display: flex;
  align-items: center;
  padding: 0 15px 0 17px;
}
.urlbar svg + svg { margin-left: 27px; }
.url { font-size: 27.300px; width: 1602px; margin-left: 21px; white-space: nowrap; color: #85848a; }
.url em { color: #15141a; }
.url + svg + svg { margin-left: 29px; }
.actions { display: flex; align-items: center; gap: 44px; margin-left: 255px; }

.bookmarks {
  height: 58px;
  flex: none;
  display: grid;
  grid-template-columns: 273px 194px 154px 153px 149px 294px 294px 1243px 245px;
  align-items: center;
  padding-left: 25px;
  border-bottom: 2px solid #ccc;
  font-size: 21.900px;
}
.bm { display: flex; align-items: center; gap: 7px; white-space: nowrap; }
.bm:last-child { gap: 3px; }
.csdn { width: 32px; height: 32px; background: #ea5f40; color: #fff; text-align: center; font-size: 28px; line-height: 32px; font-weight: 600; }

/* Page */
.viewport {
  flex: 1;
  min-height: 0;
  display: flex;
  justify-content: center;
  position: relative;
  overflow: hidden;
  background: #e6e6e6;
}
.viewport::after {
  content: "";
  position: absolute;
  inset: auto 0 0 0;
  height: 110px;
  background: linear-gradient(rgba(0, 0, 0, 0), rgba(0, 0, 0, .1));
}
.page { width: 1800px; background: #f4f4f4; font-family: "Liberation Sans", Arial, sans-serif; font-size: 26px; color: #2f2f2f; }
.banner {
  height: 176px;
  background: #2f2f2f;
  border-bottom: 10px solid #a9cb52;
  padding: 20px 0 0 795px;
}
.logo { font: 700 199px "Open Sans", sans-serif; fill: #fff; stroke: #fff; stroke-width: 5px; }
.columns { display: flex; padding: 0 40px 0 30px; }
.sidebar { width: 340px; margin-right: 84px; padding-top: 50px; display: flex; flex-direction: column; gap: 40px; }
.sidebar ul { list-style: none; margin: 0; padding: 0; display: flex; flex-direction: column; gap: 6px; }
.sidebar li {
  height: 46px;
  line-height: 42px;
  padding-left: 10px;
  background: #bebebe;
  border: 2px solid;
  border-color: #d3d3d3 #6f7990 #6f7990 #d3d3d3;
  color: #000;
  font-weight: 700;
}
.sidebar .selected { background: #a1cb47; color: #f4f4f4; border-color: #b7cf83 #6f7990 #6f7990 #b7cf83; }
.content { flex: 1; }
h1 { margin: 24px 0 0; font-size: 52px; line-height: 62px; }
.vulnerable {
  margin-top: 19px;
  height: 1067px;
  border: 2px solid #000;
  background: #f9fbfa;
  padding: 46px 40px 0;
}
.lookup { display: flex; height: 43px; margin-bottom: 26px; }
.lookup label { width: 103px; line-height: 39px; }
.lookup input { width: 253px; margin: 0 7px 0 0; border: 2px solid #8f8f9d; border-radius: 4px; background: #fff; }
.lookup button { width: 105px; padding: 0; border: 2px solid #8f8f9d; border-radius: 8px; background: #e9e9ed; font: 26.670px "Liberation Sans", Arial, sans-serif; color: #000; }
pre { margin: 0 0 26px; font: 26px/30px "DejaVu Sans Mono", monospace; color: #ea3323; }
h2 { margin: 31px 0 0; font-size: 41.600px; line-height: 48px; }
.links { margin: 25px 0 0; padding-left: 80px; line-height: 30.500px; }
.links a { color: #9fcb4c; font-weight: 700; text-decoration: underline; text-decoration-thickness: 3px; }
.assistant {
  position: absolute;
  left: 2954px;
  top: 320px;
  width: 40px;
  height: 40px;
  padding: 3px;
  border-radius: 8px;
  background: #3975f6;
  box-shadow: 0 4px 0 #d3dde9;
}

/* Dock */
.dock {
  width: 2930px;
  height: 82px;
  flex: none;
  margin: 4px 0 0 47px;
  border-radius: 24px;
  border: 2px solid rgba(255, 255, 255, .22);
  background: linear-gradient(90deg, #5a606b 0, #5d5f6b 420px, #755767 610px, #8b5870 800px, #935c62 1050px, #935d68 1330px, #99687a 1750px, #9b6880 2150px, #a86e74 2500px, #b66c60 2930px);
  display: flex;
  padding: 11px 0 0 11px;
}
.apps { display: flex; gap: 17.050px; }
.app { width: 48px; height: 66px; position: relative; }
.app svg { width: 48px; height: 48px; }
.app.on::after { content: ""; position: absolute; left: 20px; top: 59px; width: 6px; height: 6px; border-radius: 50%; background: #0b0608; }
.app em { position: absolute; left: 34px; top: -7px; width: 23px; height: 23px; border-radius: 50%; background: #ea4b3d; color: #fff; font-size: 15px; line-height: 23px; text-align: center; }
.dock hr { width: 2px; height: 58px; margin: -2px 19px 0 24px; border: 0; background: #5f3143; flex: none; }
.minis { display: flex; gap: 9px; margin-left: -3px; }
.mini { width: 56px; height: 40px; margin-top: 5px; position: relative; background: #fff; }
.mini > svg { width: 56px; height: 40px; }
.mini b { position: absolute; right: -2px; bottom: -9px; width: 19px; height: 19px; background: #fff; border-radius: 4px; padding: 2px; }
.mini b svg { width: 15px; height: 15px; }
.mini b.pv { background: linear-gradient(#93b3e4 50%, #222 50%, #aaa); }
.ide { background: linear-gradient(90deg, #303336 25%, #1f2123 25%); }
.black { background: #000; border-top: 3px solid #eee; }
.short { height: 34px; margin-top: 7px; }
.tall { height: 46px; margin-top: 1px; border-left: 3px solid #522; }
.doc { background: linear-gradient(#333, #333) 15px 4px / 32px 4px no-repeat, repeating-linear-gradient(#8bbbe2 0 3px, #fff 3px 5px) 30px 14px / 16px 16px no-repeat, linear-gradient(#556, #556) 15px 8px / 3px 20px no-repeat, #fff; }
.tall.doc { background: linear-gradient(#333, #333) 4px 6px / 48px 4px no-repeat, repeating-linear-gradient(#8bbbe2 0 3px, #fff 3px 5px) 12px 25px / 20px 20px no-repeat, #fff; }
.text { background: repeating-linear-gradient(#999 0 2px, #eee 2px 3px) 13px 8px / 27px 18px no-repeat, #f6f6f8; height: 36px; margin-top: 6px; }
.dvwa { background: #e3e5df; }
.burp { width: 60px; height: 60px; margin: -5px 0 0 8px; background: #5850f7; display: grid; place-items: center; }
.burp svg { width: 46px; height: 46px; }
.trash { width: 44px; height: 56px; margin: -4px 0 0 13px; }
.cal-m { font: 600 10px Inter, sans-serif; fill: #fff; text-anchor: middle; }
.cal-d { font: 300 28px Inter, sans-serif; fill: #222; text-anchor: middle; letter-spacing: -1px; }
.tv { font: 500 20px Inter, sans-serif; fill: #fff; }
.ai { font: 8px Inter, sans-serif; fill: #fff; text-anchor: middle; }
.term { font: 12px "Liberation Mono", monospace; fill: #62d44c; }
.pc { font: 700 17px "Open Sans", sans-serif; fill: #fff; }
.typora { font: 36px "Liberation Serif", serif; fill: #222; text-anchor: middle; }
```
